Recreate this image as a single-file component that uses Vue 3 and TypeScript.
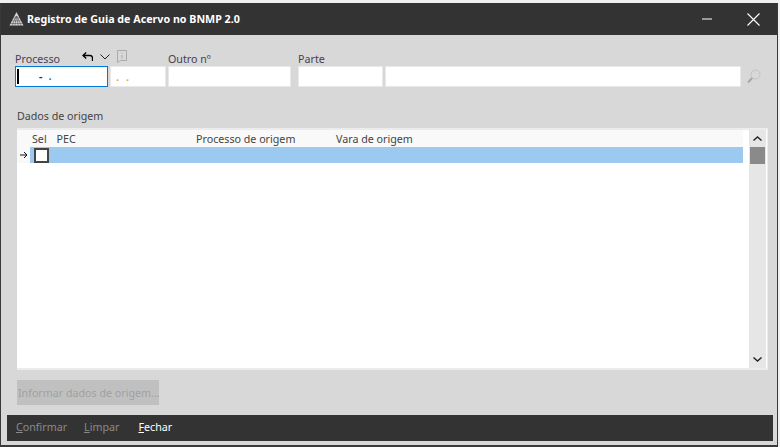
<script setup lang="ts">
const columns = [
  { label: "Sel", width: 24.5 },
  { label: "PEC", width: 139.5 },
  { label: "Processo de origem", width: 140 },
  { label: "Vara de origem", width: 200 },
];
const actions = [
  { key: "C", rest: "onfirmar", enabled: false },
  { key: "L", rest: "impar", enabled: false },
  { key: "F", rest: "echar", enabled: true },
];
</script>

<template>
  <div class="window">
    <header class="titlebar">
      <svg class="logo" width="15" height="14" viewBox="0 0 15 14">
        <path d="M7.5 0 L14.5 13.5 H.5 Z" fill="#d4d4d4" />
        <path d="M1 11.5 H14 M2.5 8.8 H12.5 M4.2 6 H10.8 M5.8 13.5 L7.5 4 L9.2 13.5 M3 13.5 L7 4 M12 13.5 L8 4" stroke="#444" stroke-width="0.5" fill="none" />
      </svg>
      <span class="title">Registro de Guia de Acervo no BNMP 2.0</span>
      <svg class="minimize" width="10" height="2" viewBox="0 0 10 2"><path d="M0 1 H10" stroke="#fff" stroke-width="1" /></svg>
      <svg class="close" width="13" height="13" viewBox="0 0 13 13"><path d="M.5 .5 L12.5 12.5 M12.5 .5 L.5 12.5" stroke="#fff" stroke-width="1.1" /></svg>
    </header>

    <main class="content">
      <div class="fields">
        <div class="field processo">
          <div class="label-row">
            <label>Processo</label>
            <div class="tools">
              <svg width="11" height="9" viewBox="0 0 11 9"><path d="M4.2 .5 L1 3.5 L4.2 6.5 M1 3.5 H8 Q10.5 3.5 10.5 6 V9" stroke="#000" stroke-width="1.3" fill="none" /></svg>
              <svg width="10" height="6" viewBox="0 0 10 6"><path d="M.5 .5 L5 5 L9.5 .5" stroke="#222" stroke-width="1" fill="none" /></svg>
              <svg width="10" height="13" viewBox="0 0 10 13"><path d="M.5 .5 H9.5 V10.5 H3.5 L.5 12.5 Z M5 2.5 V3.5 M5 5 V8.5" stroke="#aaa" stroke-width="1" fill="none" /></svg>
            </div>
          </div>
          <div class="input focused"><i class="caret"></i><span class="mask">-</span><span class="mask dot">.</span></div>
        </div>
        <div class="field seq">
          <div class="input orange"><span>.</span><span>.</span></div>
        </div>
        <div class="field outro">
          <label>Outro nº</label>
          <div class="input"></div>
        </div>
        <div class="field parte">
          <label>Parte</label>
          <div class="input"></div>
        </div>
        <div class="field nome">
          <div class="input"></div>
        </div>
        <svg class="search" width="14" height="15" viewBox="0 0 14 15">
          <circle cx="8.5" cy="5.5" r="4.5" stroke="#c2c2c2" stroke-width="1" fill="none" />
          <path d="M5.2 9 L1 13.5" stroke="#a8a8a8" stroke-width="2" />
        </svg>
      </div>

      <div class="section">Dados de origem</div>

      <div class="grid">
        <div class="grid-main">
          <div class="grid-head">
            <span v-for="c in columns" :key="c.label" :style="{ width: c.width + 'px' }">{{ c.label }}</span>
          </div>
          <div class="grid-row">
            <svg class="pointer" width="8" height="8" viewBox="0 0 8 8"><path d="M0 4 H7 M4 1 L7 4 L4 7" stroke="#111" stroke-width="1" fill="none" /></svg>
            <div class="selected"><i class="check"></i></div>
          </div>
        </div>
        <div class="scrollbar">
          <svg width="9" height="5" viewBox="0 0 9 5"><path d="M.5 4.5 L4.5 1 L8.5 4.5" stroke="#222" stroke-width="1.4" fill="none" /></svg>
          <div class="thumb"></div>
          <svg class="down" width="9" height="5" viewBox="0 0 9 5"><path d="M.5 .5 L4.5 4 L8.5 .5" stroke="#222" stroke-width="1.4" fill="none" /></svg>
        </div>
      </div>

      <button class="origin" disabled>Informar dados de origem...</button>
    </main>

    <footer class="actions">
      <span v-for="a in actions" :key="a.key" class="action" :class="{ enabled: a.enabled }"><u>{{ a.key }}</u>{{ a.rest }}</span>
    </footer>
  </div>
</template>

<style>
html, body { margin: 0; background: #f0f0f0; }
</style>

<style scoped>
.window {
  box-sizing: border-box;
  width: 778px;
  height: 444px;
  margin-top: 3px;
  border: solid #3a3a3a;
  border-width: 0 1px 2px 1px;
  background: #d8d8d8;
  display: flex;
  flex-direction: column;
  font-family: "Noto Sans", "Open Sans", sans-serif;
  font-size: 10.7px;
  color: #444;
}
.titlebar {
  height: 32px;
  flex: none;
  background: #333;
  display: flex;
  align-items: center;
  padding-left: 8px;
  color: #fff;
}
.title { margin-left: 3px; font-weight: 700; font-size: 10.7px; }
.minimize { margin-left: auto; margin-right: 35px; }
.close { margin-right: 17px; }
.content { flex: 1; padding: 0 8px 0 14px; display: flex; flex-direction: column; min-height: 0; }
.fields { display: flex; align-items: flex-end; height: 52px; }
.field { display: flex; flex-direction: column; }
.field label { line-height: 14px; color: #4a4050; }
.label-row { display: flex; position: relative; }
.tools { position: absolute; left: 67px; bottom: 3px; display: flex; align-items: center; gap: 7px; }
.input {
  box-sizing: border-box;
  height: 21px;
  background: #fff;
  border: 1px solid #e8e8e8;
  display: flex;
  align-items: center;
  position: relative;
}
.processo { width: 93px; margin-right: 2px; }
.seq { width: 56px; margin-right: 2px; }
.outro { width: 123px; margin-right: 7px; }
.parte { width: 85px; margin-right: 2px; }
.nome { width: 356px; margin-right: 6px; }
.search { margin-bottom: 3px; }
.focused { border: 1px solid #0078d7; color: #123a6a; }
.caret { width: 2px; height: 15px; background: #000; margin-left: 1px; }
.mask { margin-left: 20px; line-height: 1; font-weight: 700; }
.dot { margin-left: 6px; color: #0078d7; }
.orange { color: #e0a070; gap: 7px; padding-left: 5px; font-weight: 700; }
.section { margin: 21px 0 0 2px; line-height: 16px; }
.grid {
  margin: 4px 0 0 2px;
  width: 751px;
  height: 242px;
  box-sizing: border-box;
  background: #fff;
  border: solid #ececec;
  border-width: 2px 1px 2px 0;
  display: flex;
}
.grid-main { flex: 1; padding-right: 6px; }
.grid-head {
  height: 17px;
  background: #f9f9f9;
  display: flex;
  align-items: center;
  padding-left: 15px;
  color: #444;
}
.grid-head span { flex: none; }
.grid-row { height: 16px; display: flex; background: #f9f9f9; }
.pointer { margin: 4px 2px 0 3px; flex: none; }
.selected { flex: 1; background: #9bc9f0; padding: 1px 0 0 4px; }
.check {
  display: block;
  box-sizing: border-box;
  width: 15px;
  height: 15px;
  background: #fff;
  border: 2px solid #444;
}
.scrollbar {
  width: 17px;
  background: #e6e6e6;
  display: flex;
  flex-direction: column;
  align-items: center;
  padding-top: 6px;
  box-sizing: border-box;
  margin-right: 1px;
}
.thumb { width: 15px; height: 17px; background: #8a8a8a; margin-top: 6px; }
.down { margin-top: auto; margin-bottom: 6px; }
.origin {
  width: 142px;
  height: 25px;
  margin: 10px 0 0 2px;
  padding: 0 0 0 1px;
  border: 0;
  background: #c0c0c0;
  color: #a0a0a0;
  font: inherit;
  text-align: left;
  white-space: nowrap;
}
.actions {
  height: 26px;
  box-sizing: border-box;
  flex: none;
  margin: 10px 4px 4px 6px;
  padding: 0 0 3px 9px;
  background: #333;
  display: flex;
  align-items: center;
  gap: 17px;
}
.action { color: #8a8a8a; }
.action.enabled { color: #fff; margin-left: 2px; }
</style>
